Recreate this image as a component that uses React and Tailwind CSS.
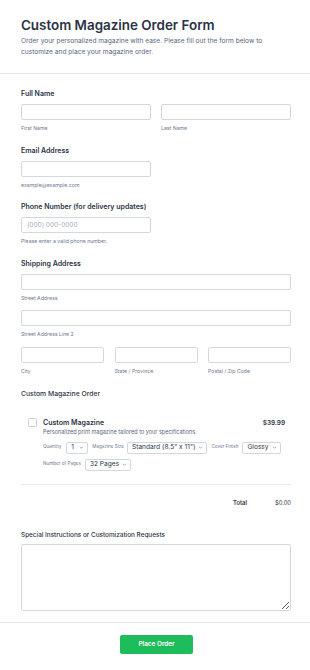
import { useState } from "react";

function Field({ label, children, className = "" }) {
  return (
    <div className={className}>
      {label ? <p className="h-[10px] text-[7px] leading-[10px] font-semibold text-[#2c3345]">{label}</p> : null}
      {children}
    </div>
  );
}

function Input({ placeholder, className = "" }) {
  return (
    <input
      placeholder={placeholder}
      className={`block h-[16px] rounded-[2px] border border-[#d3d7e2] bg-white px-[5px] text-[6.5px] text-[#2c3345] outline-none placeholder:text-[#a6adbd] ${className}`}
    />
  );
}

function Sub({ children }) {
  return <p className="mt-[4px] h-[8px] text-[5.2px] leading-[8px] text-[#6f7890]">{children}</p>;
}

function Chevron() {
  return (
    <svg viewBox="0 0 10 10" className="h-[5px] w-[5px] shrink-0" fill="none" stroke="#6f7890" strokeWidth="1.3" strokeLinecap="round" strokeLinejoin="round">
      <path d="M2.5 4 L5 6.5 L7.5 4" />
    </svg>
  );
}

function Select({ value, className = "" }) {
  return (
    <div className={`flex h-[12px] items-center justify-between gap-[3px] rounded-[2px] border border-[#d3d7e2] bg-white pl-[4px] pr-[3px] ${className}`}>
      <span className="whitespace-nowrap text-[6.6px] leading-none text-[#2c3345]">{value}</span>
      <Chevron />
    </div>
  );
}

function Tiny({ children }) {
  return <span className="whitespace-nowrap text-[4.6px] leading-none text-[#6f7890]">{children}</span>;
}

export default function App() {
  const [checked, setChecked] = useState(false);

  return (
    <div className="min-h-[670px] bg-white font-['Inter',sans-serif] text-[#2c3345]">
      <header className="border-b border-[#e6e8ee] pt-[17px] pb-[15px] pl-[21px] pr-[19px]">
        <h1 className="text-[13.4px] leading-[17px] font-semibold text-[#2c3345]">Custom Magazine Order Form</h1>
        <p className="mt-[2px] text-[6.6px] leading-[11px] text-[#57647e]">
          Order your personalized magazine with ease. Please fill out the form below to customize and place your magazine order.
        </p>
      </header>

      <form className="flex flex-col gap-[13.5px] pt-[15px] pl-[21px] pr-[19px]" onSubmit={(e) => e.preventDefault()}>
        <Field label="Full Name">
          <div className="mt-[5px] grid grid-cols-2 gap-[10px]">
            <div>
              <Input className="w-full" />
              <Sub>First Name</Sub>
            </div>
            <div>
              <Input className="w-full" />
              <Sub>Last Name</Sub>
            </div>
          </div>
        </Field>

        <Field label="Email Address">
          <Input className="mt-[5px] w-[130px]" />
          <Sub>example@example.com</Sub>
        </Field>

        <Field label="Phone Number (for delivery updates)">
          <Input className="mt-[5px] w-[130px]" placeholder="(000) 000-0000" />
          <Sub>Please enter a valid phone number.</Sub>
        </Field>

        <Field label="Shipping Address">
          <Input className="mt-[5px] w-full" />
          <Sub>Street Address</Sub>
          <Input className="mt-[8.5px] w-full" />
          <Sub>Street Address Line 2</Sub>
          <div className="mt-[9px] grid grid-cols-3 gap-[10.5px]">
            <div>
              <Input className="w-full" />
              <Sub>City</Sub>
            </div>
            <div>
              <Input className="w-full" />
              <Sub>State / Province</Sub>
            </div>
            <div>
              <Input className="w-full" />
              <Sub>Postal / Zip Code</Sub>
            </div>
          </div>
        </Field>

        <div>
          <p className="h-[10px] text-[6.8px] leading-[10px] font-medium text-[#2c3345]">Custom Magazine Order</p>
          <div className="mt-[19px] border-b border-[#e6e8ee] pb-[13px]">
            <div className="flex items-start gap-[6px] pl-[7px] pr-[6px]">
              <button
                type="button"
                onClick={() => setChecked(!checked)}
                className={`h-[9px] w-[9px] shrink-0 rounded-[1.5px] border ${checked ? "border-[#1ebd5b] bg-[#1ebd5b]" : "border-[#c9ced9] bg-white"}`}
              />
              <div className="flex-1">
                <div className="flex items-center justify-between">
                  <p className="text-[7px] leading-[10px] font-semibold text-[#2c3345]">Custom Magazine</p>
                  <p className="text-[6.4px] leading-[10px] font-semibold text-[#2c3345]">$39.99</p>
                </div>
                <p className="text-[5.5px] leading-[9px] text-[#57647e]">Personalized print magazine tailored to your specifications.</p>
                <div className="mt-[5px] flex items-center gap-[4px]">
                  <Tiny>Quantity</Tiny>
                  <Select value="1" className="ml-[1px] min-w-[22px]" />
                  <Tiny>Magazine Size</Tiny>
                  <Select value={"Standard (8.5\" x 11\")"} className="ml-[-1px]" />
                  <Tiny>Cover Finish</Tiny>
                  <Select value="Glossy" />
                </div>
                <div className="mt-[5px] flex items-center gap-[4px]">
                  <Tiny>Number of Pages</Tiny>
                  <Select value="32 Pages" />
                </div>
              </div>
            </div>
          </div>
          <div className="mt-[14px] flex h-[9px] items-center justify-end">
            <span className="text-[5.8px] font-semibold text-[#2c3345]">Total</span>
            <span className="ml-[28px] text-[5.8px] text-[#2c3345]">$0.00</span>
          </div>
        </div>

        <div className="mt-[9.5px]">
          <p className="h-[9px] text-[6.4px] leading-[9px] font-medium text-[#2c3345]">Special Instructions or Customization Requests</p>
          <textarea className="mt-[4.5px] block h-[67px] w-full resize-y rounded-[2px] border border-[#d3d7e2] bg-white p-[4px] text-[6.5px] outline-none" />
        </div>
      </form>

      <div className="mt-[11px] flex justify-center border-t border-[#e6e8ee] pt-[12px] pb-[17px]">
        <button
          type="button"
          className="ml-[3px] h-[19px] w-[73px] rounded-[2px] bg-[#1ebd5b] text-[6.4px] font-semibold text-white"
        >
          Place Order
        </button>
      </div>
    </div>
  );
}
